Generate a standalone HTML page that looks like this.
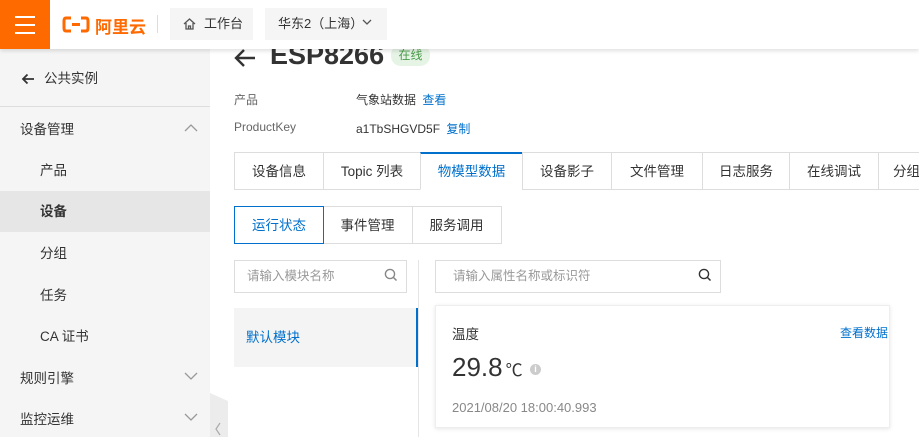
<!DOCTYPE html>
<html><head><meta charset="utf-8"><style>
*{box-sizing:border-box;margin:0;padding:0}
body{width:919px;height:437px;overflow:hidden;background:#fff;font-family:"Liberation Sans","Noto Sans CJK SC",sans-serif;font-size:13px;color:#333;position:relative}
.abs{position:absolute}
.hdr{left:0;top:0;width:919px;height:49px;background:#fff;box-shadow:0 2px 4px rgba(0,0,0,.12);z-index:5}
.sb{left:0;top:49px;width:210px;height:388px;background:#f5f5f5}
.si{position:absolute;left:0;width:210px;height:41px;line-height:41px;font-size:13.5px;color:#333}
.chev{position:absolute;right:12px;top:14px}
.tab{position:absolute;top:152px;height:38px;line-height:37px;border:1px solid #ddd;border-right:none;text-align:center;font-size:13.5px;color:#333;background:#fff}
.st{position:absolute;top:206px;height:38px;line-height:37px;border:1px solid #ddd;text-align:center;font-size:13.5px}
.inp{position:absolute;top:260px;height:33px;border:1px solid #ddd;line-height:31px;padding-left:12px;color:#999;font-size:12.5px}
</style></head><body>
<div class="abs hdr">
 <div class="abs" style="left:0;top:0;width:50px;height:49px;background:#ff6a00">
  <div class="abs" style="left:15px;top:16px;width:20px;height:2px;background:#fff"></div>
  <div class="abs" style="left:15px;top:24px;width:20px;height:2px;background:#fff"></div>
  <div class="abs" style="left:15px;top:32px;width:20px;height:2px;background:#fff"></div>
 </div>
 <svg class="abs" style="left:62px;top:16px" width="28" height="17"><path d="M9 2H4Q2 2 2 5V12Q2 15 4 15H9M19 2H24Q26 2 26 5V12Q26 15 24 15H19M10 8.5H18" stroke="#ff6a00" stroke-width="3" fill="none"/></svg>
 <div class="abs" style="left:95px;top:13px;font-size:17px;font-weight:bold;color:#ff6a00">阿里云</div>
 <div class="abs" style="left:157px;top:15px;width:1px;height:18px;background:#ddd"></div>
 <div class="abs" style="left:170px;top:8px;width:83px;height:32px;background:#f5f5f5;line-height:32px;padding-left:34px;font-size:13px">工作台</div>
 <svg class="abs" style="left:183px;top:18px" width="13" height="12"><path d="M1 6L6.5 1L12 6M3 5V11H10V5M5.5 11V8H7.5V11" stroke="#555" stroke-width="1.3" fill="none"/></svg>
 <div class="abs" style="left:265px;top:8px;width:122px;height:32px;background:#f5f5f5;line-height:32px;padding-left:13px;font-size:13px">华东2（上海）</div>
 <svg class="abs" style="left:362px;top:19px" width="10" height="7"><path d="M1 1L5 5L9 1" stroke="#555" stroke-width="1.3" fill="none"/></svg>
</div>
<div class="abs sb">
 <div class="si" style="top:9px;padding-left:44px">公共实例</div>
 <svg class="abs" style="left:21px;top:24px" width="14" height="12"><path d="M13 6H2M6.5 1.5L2 6L6.5 10.5" stroke="#333" stroke-width="1.8" fill="none"/></svg>
 <div class="abs" style="left:0;top:57px;width:210px;height:1px;background:#ddd"></div>
 <div class="si" style="top:60px;padding-left:20px">设备管理<svg class="chev" width="14" height="9"><path d="M1 8L7 2L13 8" stroke="#999" stroke-width="1.3" fill="none"/></svg></div>
 <div class="si" style="top:101px;padding-left:40px">产品</div>
 <div class="si" style="top:142px;padding-left:40px;background:#e6e6e6;font-weight:bold">设备</div>
 <div class="si" style="top:184px;padding-left:40px">分组</div>
 <div class="si" style="top:226px;padding-left:40px">任务</div>
 <div class="si" style="top:267px;padding-left:40px">CA 证书</div>
 <div class="si" style="top:309px;padding-left:20px">规则引擎<svg class="chev" width="14" height="9"><path d="M1 1L7 7L13 1" stroke="#999" stroke-width="1.3" fill="none"/></svg></div>
 <div class="si" style="top:350px;padding-left:20px">监控运维<svg class="chev" width="14" height="9"><path d="M1 1L7 7L13 1" stroke="#999" stroke-width="1.3" fill="none"/></svg></div>
</div>
<svg class="abs" style="left:210px;top:393px" width="18" height="44"><path d="M0 0L18 8V44H0Z" fill="#ececec"/><path d="M10 30L6 36L10 42" stroke="#aaa" stroke-width="1.2" fill="none"/></svg>
<svg class="abs" style="left:234px;top:48px" width="22" height="20"><path d="M21 10H3M10 2L2 10L10 18" stroke="#333" stroke-width="2.4" fill="none"/></svg>
<div class="abs" style="left:270px;top:38px;font-size:27px;font-weight:bold;color:#333;line-height:34px">ESP8266</div>
<div class="abs" style="left:391px;top:45px;width:39px;height:21px;border-radius:10px;background:#e6f4e6;color:#4a9b4a;font-size:12px;text-align:center;line-height:20px">在线</div>
<div class="abs" style="left:234px;top:91px;font-size:12px;color:#666">产品</div>
<div class="abs" style="left:356px;top:91px;font-size:12px;color:#333">气象站数据 <span style="color:#0070cc;margin-left:3px">查看</span></div>
<div class="abs" style="left:234px;top:120px;font-size:12px;color:#666">ProductKey</div>
<div class="abs" style="left:356px;top:120px;font-size:12px;color:#333">a1TbSHGVD5F <span style="color:#0070cc;margin-left:3px">复制</span></div>
<div class="tab" style="left:234px;width:89px">设备信息</div>
<div class="tab" style="left:323px;width:97px">Topic 列表</div>
<div class="tab" style="left:420px;width:102px;color:#0070cc;border-top:2px solid #0070cc;border-bottom-color:#fff;line-height:35px">物模型数据</div>
<div class="tab" style="left:522px;width:89px">设备影子</div>
<div class="tab" style="left:611px;width:91px">文件管理</div>
<div class="tab" style="left:702px;width:87px">日志服务</div>
<div class="tab" style="left:789px;width:89px">在线调试</div>
<div class="tab" style="left:878px;width:60px;text-align:left;padding-left:14px">分组</div>
<div class="st" style="left:234px;width:90px;border-color:#0070cc;color:#0070cc;z-index:2">运行状态</div>
<div class="st" style="left:323px;width:90px;border-left:none">事件管理</div>
<div class="st" style="left:412px;width:90px;border-left:none">服务调用</div>
<div class="inp" style="left:234px;width:173px">请输入模块名称</div>
<div class="inp" style="left:435px;width:286px;padding-left:17px">请输入属性名称或标识符</div>
<svg class="abs" style="left:384px;top:268px" width="14" height="15"><circle cx="6" cy="6" r="4.6" stroke="#888" stroke-width="1.4" fill="none"/><path d="M9.5 9.5L12.5 12.5" stroke="#888" stroke-width="1.5"/></svg>
<svg class="abs" style="left:698px;top:268px" width="14" height="15"><circle cx="6" cy="6" r="4.6" stroke="#333" stroke-width="1.4" fill="none"/><path d="M9.5 9.5L12.5 12.5" stroke="#333" stroke-width="1.5"/></svg>
<div class="abs" style="left:418px;top:260px;width:1px;height:177px;background:#e5e5e5"></div>
<div class="abs" style="left:234px;top:308px;width:184px;height:59px;background:#f4f4f4;border-right:2px solid #0070cc;line-height:59px;padding-left:12px;color:#0070cc;font-size:13.5px">默认模块</div>
<div class="abs" style="left:435px;top:305px;width:455px;height:123px;background:#fff;border:1px solid #eee;box-shadow:0 1px 4px rgba(0,0,0,.1)">
 <div class="abs" style="left:16px;top:17px;font-size:13.5px;color:#333">温度</div>
 <div class="abs" style="left:404px;top:18px;font-size:12px;color:#0070cc">查看数据</div>
 <div class="abs" style="left:16px;top:46px;font-size:26px;color:#333;line-height:30px">29.8<span style="font-size:17px;margin-left:3px">℃</span></div>
 <div class="abs" style="left:94px;top:58px;width:11px;height:11px;border-radius:50%;background:#ccc;color:#fff;font-size:9px;text-align:center;line-height:11px;font-weight:bold">i</div>
 <div class="abs" style="left:16px;top:94px;font-size:13px;color:#888">2021/08/20 18:00:40.993</div>
</div>
</body></html>
